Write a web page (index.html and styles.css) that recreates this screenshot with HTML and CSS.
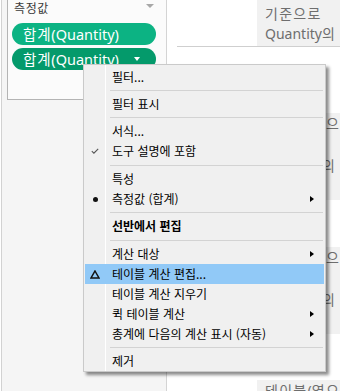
FILE: index.html
```html
<!DOCTYPE html>
<html lang="ko">
<head>
<meta charset="utf-8">
<link rel="stylesheet" href="styles.css">
</head>
<body>
<div class="screen">
  <aside class="side">
    <div class="card">
      <div class="card-head"><span class="label">측정값</span><span class="caret"></span></div>
      <div class="pill"><span class="ko">합계</span>(Quantity)</div>
      <div class="pill pill-active"><span class="ko">합계</span>(Quantity)<span class="pill-caret"></span></div>
    </div>
  </aside>
  <main class="view">
    <div class="row-top">
      <div class="note note-top"><p><span class="ko">기준으로</span></p><p>Quantity<span class="ko">의</span></p></div>
    </div>
    <div class="note"><p><span class="ko">테이블</span>(<span class="ko">옆으로</span>)</p><p><span class="ko">기준으로</span></p><p>Quantity<span class="ko">의</span></p><p><span class="ko">누계</span></p></div>
    <div class="note"><p><span class="ko">테이블</span>(<span class="ko">옆으로</span>)</p><p><span class="ko">기준으로</span></p><p>Quantity<span class="ko">의</span></p><p><span class="ko">누계</span></p></div>
    <div class="note note-last"><p><span class="ko">테이블</span>(<span class="ko">옆으로</span>)</p><p><span class="ko">기준으로</span></p></div>
  </main>

  <div class="menu">
    <div class="item"><span class="ico"></span><span class="txt">필터...</span></div>
    <div class="sep"></div>
    <div class="item"><span class="ico"></span><span class="txt">필터 표시</span></div>
    <div class="sep"></div>
    <div class="item"><span class="ico"></span><span class="txt">서식...</span></div>
    <div class="item"><span class="ico"><svg width="8" height="6" viewBox="0 0 8 6"><path d="M0.8 3.2 L2.9 5.2 L7.2 0.8" fill="none" stroke="#555" stroke-width="1.1"/></svg></span><span class="txt">도구 설명에 포함</span></div>
    <div class="sep sep-wide"></div>
    <div class="item"><span class="ico"></span><span class="txt">특성</span></div>
    <div class="item"><span class="ico"><span class="dot"></span></span><span class="txt">측정값 (합계)</span><span class="sub"></span></div>
    <div class="sep"></div>
    <div class="item"><span class="ico"></span><span class="txt bold">선반에서 편집</span></div>
    <div class="sep sep-wide"></div>
    <div class="item"><span class="ico"></span><span class="txt">계산 대상</span><span class="sub"></span></div>
    <div class="item hot"><span class="ico"><svg width="10" height="9" viewBox="0 0 10 9"><path d="M5 1 L9 8 L1 8 Z" fill="none" stroke="#111" stroke-width="1.5" stroke-linejoin="miter"/></svg></span><span class="txt">테이블 계산 편집...</span></div>
    <div class="item"><span class="ico"></span><span class="txt">테이블 계산 지우기</span></div>
    <div class="item"><span class="ico"></span><span class="txt">퀵 테이블 계산</span><span class="sub"></span></div>
    <div class="item"><span class="ico"></span><span class="txt">총계에 다음의 계산 표시 (자동)</span><span class="sub"></span></div>
    <div class="sep"></div>
    <div class="item"><span class="ico"></span><span class="txt">제거</span></div>
  </div>
</div>
</body>
</html>
```
FILE: styles.css
```css
* { box-sizing: border-box; }
html, body { margin: 0; padding: 0; background: #fff; }
p { margin: 0; }

.screen {
  position: relative;
  display: flex;
  width: 340px;
  height: 391px;
  overflow: hidden;
  padding-left: 1px;
  font-family: "Noto Sans", "Noto Sans CJK KR", sans-serif;
}

/* left shelf panel */
.side {
  width: 166px;
  flex: none;
  background: #f5f5f5;
  border-left: 1px solid #d2d2d2;
  border-right: 1px solid #d4d4d4;
  padding-left: 5px;
}
.card {
  margin-top: -1px;
  height: 101px;
  background: #fbfbfb;
  border-top: 1px solid #b4b4b4;
  border-left: 1px solid #b4b4b4;
  border-bottom: 1px solid #b4b4b4;
  padding-left: 4px;
}
.card-head {
  height: 23px;
  display: flex;
  justify-content: space-between;
  align-items: flex-start;
  padding-top: 1px;
  padding-left: 2px;
  padding-right: 12px;
}
.label {
  font-family: "Noto Sans CJK KR", sans-serif;
  font-size: 12px;
  line-height: 14px;
  letter-spacing: 0.6px;
  color: #3a3a3a;
}
.caret {
  margin-top: 3px;
  width: 0; height: 0;
  border-left: 4px solid transparent;
  border-right: 4px solid transparent;
  border-top: 4px solid #a8a8a8;
}
.pill {
  width: 144px;
  height: 22px;
  border-radius: 11px;
  background: #0cb383;
  color: #fff;
  font-size: 14.5px;
  line-height: 22px;
  padding-left: 11px;
  display: flex;
  align-items: center;
  white-space: nowrap;
}
.pill .ko { letter-spacing: 0.8px; }
.pill + .pill { margin-top: 3px; }
.pill-active { background: #049a6b; }
.pill-caret {
  margin-left: auto;
  margin-right: 16px;
  width: 0; height: 0;
  border-left: 3.5px solid transparent;
  border-right: 3.5px solid transparent;
  border-top: 4px solid #fff;
}

/* view area */
.view {
  flex: 1;
  background: #fff;
  padding-left: 10px;
  min-width: 0;
}
.row-top {
  height: 47px;
  border-bottom: 1px solid #cfcfcf;
  padding-left: 80px;
}
.note {
  margin-left: 80px;
  background: #f1f1f1;
  color: #6e6e6e;
  font-size: 14px;
  line-height: 21px;
  padding: 0 0 3px 8px;
  white-space: nowrap;
  overflow: hidden;
  margin-top: 47px;
}
.note .ko { letter-spacing: 1.3px; }
.row-top + .note { margin-top: 66px; }
.note-top {
  margin: 0;
  height: 46px;
  line-height: 20px;
  padding-top: 4px;
}
.note-last { margin-top: 46px; }

/* context menu */
.menu {
  position: absolute;
  left: 83px;
  top: 64px;
  width: 243px;
  height: 308px;
  border: 1px solid #cacaca;
  background: linear-gradient(to right, #f0f0f0 0, #f0f0f0 21px, #ffffff 21px, #ffffff 22px, #f0f0f0 22px);
  box-shadow: 3px 3px 3px rgba(0, 0, 0, 0.45);
  padding-top: 2px;
  font-family: "Noto Sans CJK KR", sans-serif;
  font-size: 12px;
  color: #000;
}
.item {
  height: 20px;
  margin: 0 1px;
  display: flex;
  align-items: center;
}
.item.hot { background: #91c9f7; }
.ico {
  width: 20px;
  height: 20px;
  flex: none;
  display: flex;
  align-items: center;
  justify-content: center;
}
.txt {
  padding-left: 7px;
  white-space: nowrap;
  line-height: 20px;
}
.bold { font-weight: 700; }
.dot {
  width: 5px;
  height: 5px;
  border-radius: 50%;
  background: #111;
}
.sub {
  margin-left: auto;
  margin-right: 10px;
  width: 0; height: 0;
  border-top: 3.5px solid transparent;
  border-bottom: 3.5px solid transparent;
  border-left: 4px solid #000;
}
.sep {
  height: 7px;
  margin: 0 2px 0 26px;
  padding-top: 3px;
}
.sep::after {
  content: "";
  display: block;
  height: 1px;
  background: #d3d3d3;
}
.sep-wide { height: 8px; padding-top: 4px; }
```
